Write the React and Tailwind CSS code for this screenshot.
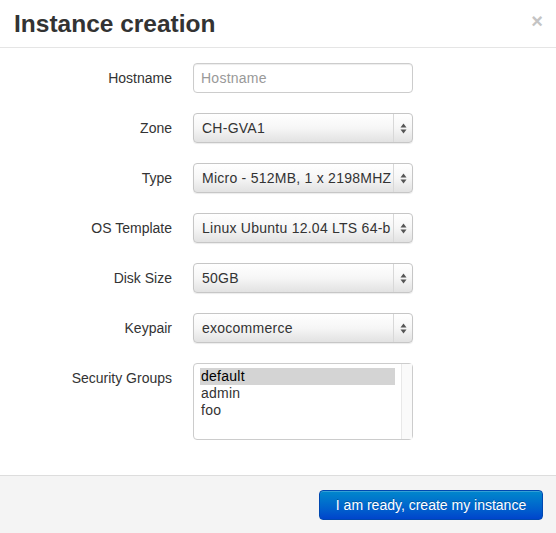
import React from "react";

const font = { fontFamily: '"Liberation Sans", Arial, Helvetica, sans-serif' };

function Arrows() {
  return (
    <svg width="7" height="11" viewBox="0 0 7 11">
      <path d="M3.5 0.5 L6.5 4.5 L0.5 4.5 Z" fill="#555" />
      <path d="M3.5 10.5 L6.5 6.5 L0.5 6.5 Z" fill="#555" />
    </svg>
  );
}

function Select({ value }) {
  return (
    <div className="flex h-[30px] w-[220px] items-center rounded-[4px] border border-[#c6c6c6] bg-gradient-to-b from-[#ffffff] via-[#f6f6f6] to-[#e2e2e2] shadow-[0_1px_1px_rgba(0,0,0,0.08)]">
      <div className="flex-1 whitespace-nowrap pl-[8px] text-[14px] tracking-[0.25px] text-[#333]">{value}</div>
      <div className="flex h-full w-[19px] items-center justify-center border-l border-[#d8d8d8]">
        <Arrows />
      </div>
    </div>
  );
}

function Row({ label, children, top = false }) {
  return (
    <div className={`flex ${top ? "items-start" : "items-center"}`}>
      <div className={`w-[172px] text-right text-[14px] text-[#333] ${top ? "pt-[5px]" : ""}`}>{label}</div>
      <div className="ml-[21px]">{children}</div>
    </div>
  );
}

export default function App() {
  return (
    <div style={font} className="flex h-[533px] w-[556px] flex-col bg-white">
      <div className="flex h-[48px] items-start justify-between border-b border-[#e5e5e5] pl-[14px] pr-[13px]">
        <h3 className="mt-[4px] text-[24.5px] font-bold leading-[40px] text-[#333]">Instance creation</h3>
        <span className="mt-[9px] text-[20px] font-bold leading-[24px] text-[#c4c4c4]">×</span>
      </div>
      <div className="flex flex-col gap-[20px] pt-[15px]">
        <Row label="Hostname">
          <div className="flex h-[30px] w-[220px] items-center rounded-[4px] border border-[#cccccc] pl-[7px] text-[14px] tracking-[0.25px] text-[#999] shadow-[inset_0_1px_1px_rgba(0,0,0,0.075)]">
            Hostname
          </div>
        </Row>
        <Row label="Zone"><Select value="CH-GVA1" /></Row>
        <Row label="Type"><Select value="Micro - 512MB, 1 x 2198MHZ" /></Row>
        <Row label="OS Template"><Select value="Linux Ubuntu 12.04 LTS 64-b" /></Row>
        <Row label="Disk Size"><Select value="50GB" /></Row>
        <Row label="Keypair"><Select value="exocommerce" /></Row>
        <Row label="Security Groups" top>
          <div className="flex h-[77px] w-[220px] rounded-[4px] border border-[#cccccc]">
            <div className="flex-1 pl-[6px] pr-[6px] pt-[4px] text-[14px] leading-[17px] tracking-[0.25px] text-[#333]">
              <div className="bg-[#d4d4d4] pl-[1px] text-black">default</div>
              <div className="pl-[1px]">admin</div>
              <div className="pl-[1px]">foo</div>
            </div>
            <div className="w-[11px] border-l border-[#e8e8e8] bg-[#fafafa]" />
          </div>
        </Row>
      </div>
      <div className="mt-auto flex h-[58px] items-start justify-end border-t border-[#dddddd] bg-[#f4f4f4] pr-[13px] pt-[14px]">
        <button className="flex h-[30px] w-[224px] items-center justify-center rounded-[4px] border border-[#0048b0] bg-gradient-to-b from-[#0088cc] to-[#0044cc] text-[14px] text-white shadow-[inset_0_1px_0_rgba(255,255,255,0.2)] [text-shadow:0_-1px_0_rgba(0,0,0,0.25)]">
          I am ready, create my instance
        </button>
      </div>
    </div>
  );
}
